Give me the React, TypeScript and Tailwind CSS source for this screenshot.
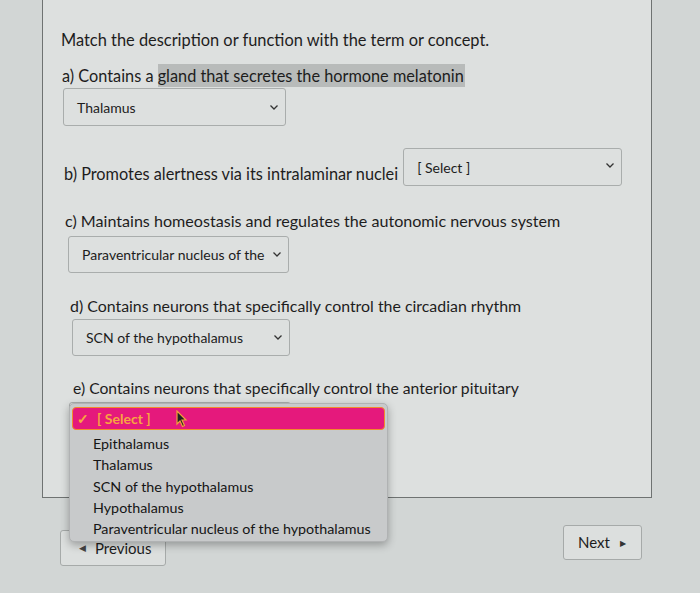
import React from 'react'

const font = { fontFamily: 'Lato, "Open Sans", sans-serif' }

function Chevron() {
  return (
    <svg width="10" height="7" viewBox="0 0 10 7" className="shrink-0">
      <path d="M1.5 1.5 L5 5 L8.5 1.5" fill="none" stroke="#333" strokeWidth="1.3" />
    </svg>
  )
}

function Select({ value, className }: { value: string; className: string }) {
  return (
    <div
      className={`flex items-center justify-between border border-[#a9adac] bg-[#dde0df] rounded-[3px] pl-[13px] pr-[6px] text-[14px] text-[#1c1c1c] ${className}`}
    >
      <span>{value}</span>
      <Chevron />
    </div>
  )
}

const options = [
  'Epithalamus',
  'Thalamus',
  'SCN of the hypothalamus',
  'Hypothalamus',
  'Paraventricular nucleus of the hypothalamus',
]

export default function App() {
  return (
    <div
      className="relative w-[700px] h-[593px] overflow-hidden bg-[#d2d6d5] text-[#1d1d1d]"
      style={font}
    >
      <div className="ml-[42px] w-[610px] h-[498px] bg-[#dde0df] border-l border-r border-b border-[#6f7372] pt-[30px]">
        <div className="pl-[18px] text-[16.4px] leading-[20px]">
          Match the description or function with the term or concept.
        </div>

        <div className="mt-[16px] pl-[19px] text-[16.3px] leading-[20px]">
          a) Contains a{' '}
          <span className="bg-[#b8bbba] py-[2px] pr-[1px]">
            gland that secretes the hormone melatonin
          </span>
        </div>
        <Select value="Thalamus" className="ml-[20px] mt-[2px] w-[223px] h-[38px]" />

        <div className="mt-[22px] pl-[21px] flex items-start">
          <span className="mt-[16px] text-[16.3px] leading-[20px]">
            b) Promotes alertness via its intralaminar nuclei
          </span>
          <Select
            value="[ Select ]"
            className="ml-[5px] w-[219px] h-[38px] !items-start pt-[8px] [&>svg]:mt-[5px]"
          />
        </div>

        <div className="mt-[25px] pl-[22px] text-[16.1px] leading-[20px]">
          c) Maintains homeostasis and regulates the autonomic nervous system
        </div>
        <Select value="Paraventricular nucleus of the" className="ml-[25px] mt-[5px] w-[221px] h-[37px]" />

        <div className="mt-[23px] pl-[27px] text-[15.9px] leading-[20px]">
          d) Contains neurons that specifically control the circadian rhythm
        </div>
        <Select value="SCN of the hypothalamus" className="ml-[29px] mt-[3px] w-[218px] h-[37px]" />

        <div className="mt-[22px] pl-[30px] text-[15.7px] leading-[20px]">
          e) Contains neurons that specifically control the anterior pituitary
        </div>
        {/* open select: the closed box sits under the menu */}
        <div className="relative ml-[26px] mt-[4px] w-[222px] h-[37px]">
          <div className="w-full h-full border border-[#a9adac] bg-[#dde0df] rounded-[3px]" />
          <div className="absolute z-10 left-0 top-[1px] w-[319px] h-[139px] bg-[#c8cacb] rounded-[5px] shadow-[0_3px_8px_rgba(0,0,0,0.3)] border border-[#b0b2b3] pt-[3px] px-[2px]">
            <div className="flex items-center h-[23px] rounded-[4px] bg-[#e5197c] border border-[#f28a2c] pl-[4px] text-[14px] font-bold text-[#f7a640]">
              <span className="mr-[8px]">✓</span>
              <span>[ Select ]</span>
              <svg width="14" height="18" viewBox="0 0 14 18" className="ml-[24px]">
                <path d="M2 1 L2 14 L5 11 L7.5 16.5 L9.5 15.5 L7 10 L11 10 Z" fill="#222" stroke="#f2a03a" strokeWidth="1.2" />
              </svg>
            </div>
            <div className="pl-[21px] pt-[3px] text-[14.3px] leading-[21.3px] text-[#151515]">
              {options.map((o) => (
                <div key={o}>{o}</div>
              ))}
            </div>
          </div>
        </div>
      </div>

      <div className="flex items-start justify-between pl-[60px] pr-[58px] mt-[27px]">
        <div className="mt-[5px] w-[106px] h-[36px] border border-[#a6aaa9] bg-[#dcdfde] rounded-[3px] flex items-center pl-[18px] text-[15px]">
          <span className="text-[9px] mr-[9px] text-[#444]">◀</span>
          Previous
        </div>
        <div className="w-[79px] h-[35px] border border-[#a6aaa9] bg-[#dcdfde] rounded-[3px] flex items-center pl-[14px] text-[15px]">
          Next
          <span className="text-[8px] ml-[10px] text-[#333]">▶</span>
        </div>
      </div>
    </div>
  )
}
